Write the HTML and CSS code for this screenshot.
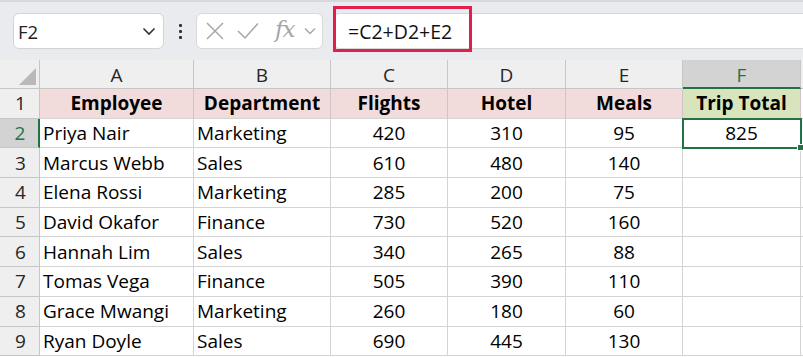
FILE: index.html
```html
<!DOCTYPE html>
<html>
<head>
<meta charset="utf-8">
<link rel="stylesheet" href="styles.css">
</head>
<body>
<div class="toolbar">
  <div class="namebox">
    <span class="name">F2</span>
    <svg class="chev" width="14" height="9" viewBox="0 0 14 9"><path d="M1.5 1.5 L7 7 L12.5 1.5" fill="none" stroke="#333" stroke-width="1.6"/></svg>
  </div>
  <div class="dots"><i></i><i></i><i></i></div>
  <div class="fxbox">
    <svg width="20" height="20" viewBox="0 0 20 20"><path d="M2 2 L18 18 M18 2 L2 18" stroke="#a6a6a6" stroke-width="1.5" fill="none"/></svg>
    <svg width="22" height="18" viewBox="0 0 22 18"><path d="M1 9 L8 16 L21 1.5" stroke="#a6a6a6" stroke-width="1.5" fill="none"/></svg>
    <span class="fx">fx</span>
    <svg width="12" height="8" viewBox="0 0 12 8"><path d="M1 1.5 L6 6.5 L11 1.5" fill="none" stroke="#a6a6a6" stroke-width="1.4"/></svg>
  </div>
  <div class="formula"><span class="ftext">=C2+D2+E2</span></div>
  <div class="highlight"></div>
</div>
<div class="sheet">
  <div class="corner"><div class="tri"></div></div>
  <div class="ch">A</div><div class="ch">B</div><div class="ch">C</div><div class="ch">D</div><div class="ch">E</div><div class="ch sel">F</div><div class="ch edge"></div>

  <div class="rh">1</div>
  <div class="c hd">Employee</div><div class="c hd">Department</div><div class="c hd">Flights</div><div class="c hd">Hotel</div><div class="c hd">Meals</div><div class="c hd tot">Trip Total</div><div class="c edge"></div>

  <div class="rh sel">2</div>
  <div class="c">Priya Nair</div><div class="c">Marketing</div><div class="c n">420</div><div class="c n">310</div><div class="c n">95</div><div class="c n active">825<span class="handle"></span></div><div class="c edge"></div>

  <div class="rh">3</div>
  <div class="c">Marcus Webb</div><div class="c">Sales</div><div class="c n">610</div><div class="c n">480</div><div class="c n">140</div><div class="c n"></div><div class="c edge"></div>

  <div class="rh">4</div>
  <div class="c">Elena Rossi</div><div class="c">Marketing</div><div class="c n">285</div><div class="c n">200</div><div class="c n">75</div><div class="c n"></div><div class="c edge"></div>

  <div class="rh">5</div>
  <div class="c">David Okafor</div><div class="c">Finance</div><div class="c n">730</div><div class="c n">520</div><div class="c n">160</div><div class="c n"></div><div class="c edge"></div>

  <div class="rh">6</div>
  <div class="c">Hannah Lim</div><div class="c">Sales</div><div class="c n">340</div><div class="c n">265</div><div class="c n">88</div><div class="c n"></div><div class="c edge"></div>

  <div class="rh">7</div>
  <div class="c">Tomas Vega</div><div class="c">Finance</div><div class="c n">505</div><div class="c n">390</div><div class="c n">110</div><div class="c n"></div><div class="c edge"></div>

  <div class="rh">8</div>
  <div class="c">Grace Mwangi</div><div class="c">Marketing</div><div class="c n">260</div><div class="c n">180</div><div class="c n">60</div><div class="c n"></div><div class="c edge"></div>

  <div class="rh">9</div>
  <div class="c">Ryan Doyle</div><div class="c">Sales</div><div class="c n">690</div><div class="c n">445</div><div class="c n">130</div><div class="c n"></div><div class="c edge"></div>
</div>
</body>
</html>
```

FILE: styles.css
```css
* { box-sizing: border-box; }
html, body { margin: 0; padding: 0; }
body {
  width: 803px;
  height: 357px;
  overflow: hidden;
  background: #fff;
  font-family: "Open Sans", "Noto Sans", sans-serif;
  color: #000;
}
.toolbar {
  position: relative;
  height: 60px;
  background: #e9ebee;
  border-top: 2px solid #d6d8db;
  display: flex;
  align-items: center;
  padding-left: 13px;
}
.namebox {
  width: 151px;
  height: 36px;
  background: #fff;
  border: 1px solid #d3d3d3;
  border-radius: 6px;
  display: flex;
  align-items: center;
  justify-content: space-between;
  padding: 0 7px 0 4px;
}
.name {
  font-size: 18.5px;
  color: #222;
}
.dots {
  width: 32px;
  display: flex;
  flex-direction: column;
  align-items: center;
  gap: 3px;
}
.dots i {
  display: block;
  width: 3px;
  height: 3px;
  background: #333;
  border-radius: 1px;
}
.fxbox {
  width: 127px;
  height: 36px;
  background: #fff;
  border: 1px solid #d9d9d9;
  border-radius: 6px;
  display: flex;
  align-items: center;
  padding-left: 8px;
}
.fxbox svg:nth-child(2) { margin-left: 12px; }
.fxbox .fx {
  font-family: "DejaVu Serif", "Liberation Serif", serif;
  font-style: italic;
  font-size: 23px;
  color: #a6a6a6;
  margin-left: 16px;
  letter-spacing: -1px;
  line-height: 1;
  margin-top: -3px;
}
.fxbox svg:nth-child(4) { margin-left: 10px; }
.formula {
  flex: 1;
  height: 36px;
  margin-left: 10px;
  background: #fff;
  border: 1px solid #d6d6d6;
  border-right: none;
  border-radius: 6px 0 0 6px;
  display: flex;
  align-items: center;
  padding-left: 14px;
}
.ftext {
  font-size: 19.5px;
  color: #111;
}
.highlight {
  position: absolute;
  left: 333px;
  top: 4px;
  width: 139px;
  height: 46px;
  border: 3px solid #e0204b;
}
.sheet {
  display: grid;
  grid-template-columns: 40px 154px 137px 117px 118px 117px 118px 2px;
  grid-template-rows: 29px repeat(9, 29.7px);
  font-size: 19px;
}
.corner {
  background: #efefef;
  border-right: 1px solid #c6c6c6;
  border-bottom: 1px solid #c6c6c6;
  position: relative;
}
.tri {
  position: absolute;
  right: 3px;
  bottom: 3px;
  width: 0;
  height: 0;
  border-left: 17px solid transparent;
  border-bottom: 17px solid #b9b9b9;
}
.ch {
  background: #efefef;
  border-right: 1px solid #c6c6c6;
  border-bottom: 1px solid #c6c6c6;
  display: flex;
  align-items: center;
  justify-content: center;
  color: #262626;
  padding-top: 1px;
}
.ch.sel {
  background: #d3d3d3;
  color: #217346;
  border-bottom: 2px solid #217346;
  padding-top: 2px;
}
.ch.edge, .c.edge { border-right: none; }
.rh {
  background: #efefef;
  border-right: 1px solid #c6c6c6;
  border-bottom: 1px solid #c6c6c6;
  display: flex;
  align-items: center;
  justify-content: center;
  color: #262626;
  padding-left: 2px;
}
.rh.sel {
  background: #d3d3d3;
  color: #217346;
  border-right: 2px solid #217346;
}
.c {
  border-right: 1px solid #d4d4d4;
  border-bottom: 1px solid #d4d4d4;
  display: flex;
  align-items: center;
  padding-left: 3px;
  white-space: nowrap;
  overflow: visible;
  position: relative;
}
.c.n { justify-content: center; padding-left: 0; }
.c.hd {
  background: #f2dcdb;
  font-weight: bold;
  justify-content: center;
  padding-left: 0;
  border-right-color: #d0c4c4;
}
.c.hd.tot { background: #d8e4bc; }
.c.active {
  outline: 2px solid #217346;
  outline-offset: -1px;
  z-index: 2;
}
.handle {
  position: absolute;
  right: -4px;
  bottom: -4px;
  width: 7px;
  height: 7px;
  background: #217346;
  border: 1px solid #fff;
}
```
